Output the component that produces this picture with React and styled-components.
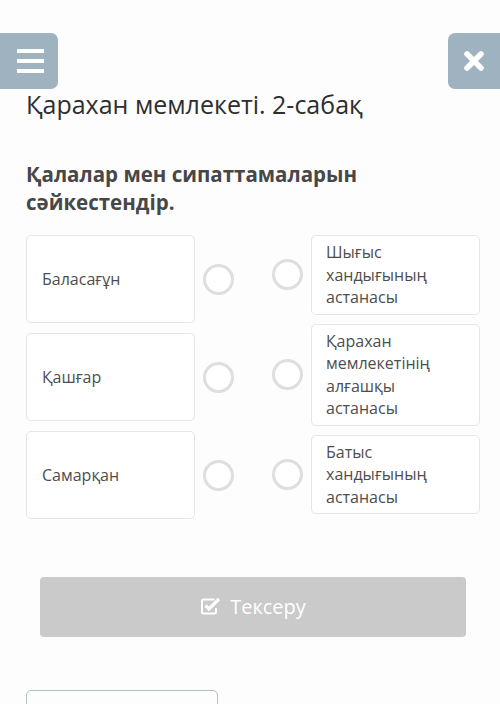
import React from 'react';
import styled, { createGlobalStyle } from 'styled-components';

const GlobalStyle = createGlobalStyle`
    html, body {
        margin: 0;
        padding: 0;
        background: #fdfdfd;
        font-family: "Open Sans", "Noto Sans", sans-serif;
    }
`;

const Page = styled.div`
    width: 500px;
    height: 704px;
    overflow: hidden;
`;

const TopBar = styled.div`
    display: flex;
    justify-content: space-between;
    padding-top: 33px;
`;

const IconButton = styled.button`
    width: ${({w}) => w}px;
    height: 56px;
    border: 0;
    padding: 0;
    background: #9fb2bf;
    border-radius: ${({side}) => side === 'left' ? '0 7px 7px 0' : '7px 0 0 7px'};
    display: flex;
    align-items: center;
    justify-content: center;
`;

const Burger = styled.div`
    display: flex;
    flex-direction: column;
    gap: 6px;
    margin-left: 2px;
    span {
        display: block;
        width: 27px;
        height: 4px;
        background: #fff;
    }
`;

const Title = styled.h1`
    margin: 0;
    padding: 0 26px;
    font-size: 25px;
    font-weight: 400;
    line-height: 30px;
    color: #2e2e2e;
`;

const Task = styled.h2`
    margin: 0;
    padding: 41px 26px 0;
    font-size: 20.5px;
    font-weight: 700;
    line-height: 28px;
    color: #474747;
`;

const Board = styled.div`
    display: flex;
    justify-content: space-between;
    padding: 19px 20px 0 26px;
`;

const Column = styled.div`
    display: flex;
    flex-direction: column;
    gap: ${({gap}) => gap}px;
`;

const Pair = styled.div`
    display: flex;
    align-items: center;
    gap: ${({gap}) => gap}px;
`;

const Card = styled.div`
    box-sizing: border-box;
    width: 169px;
    min-height: ${({minH}) => minH || 0}px;
    padding: ${({pad}) => pad};
    border: 1.5px solid #e6e6e6;
    border-radius: 5px;
    background: #fff;
    display: flex;
    align-items: center;
    font-size: 16px;
    line-height: 22.5px;
    color: #4e4e4e;
`;

const Lines = styled.div`
    display: flex;
    flex-direction: column;
`;

const Dot = styled.div`
    box-sizing: border-box;
    width: 31px;
    height: 31px;
    border-radius: 50%;
    border: 3px solid #dedede;
    background: #fff;
`;

const CheckButton = styled.button`
    display: flex;
    align-items: center;
    justify-content: center;
    gap: 9px;
    width: 426px;
    height: 60px;
    margin: 58px 0 0 40px;
    border: 0;
    border-radius: 4px;
    background: #cacaca;
    color: #fff;
    font-family: inherit;
    font-size: 20px;
    padding: 0 0 2px;
`;

const NextBox = styled.div`
    width: 190px;
    height: 40px;
    margin: 53px 0 0 26px;
    border: 1.5px solid #b5c1c1;
    border-radius: 5px;
`;

const leftItems = ['Баласағұн', 'Қашғар', 'Самарқан'];
const rightItems = [
    ['Шығыс', 'хандығының', 'астанасы'],
    ['Қарахан', 'мемлекетінің', 'алғашқы', 'астанасы'],
    ['Батыс', 'хандығының', 'астанасы'],
];

const CloseIcon = () => (
    <svg width="22" height="22" viewBox="0 0 22 22">
        <path d="M4 4 L18 18 M18 4 L4 18" stroke="#fff" strokeWidth="5.5" strokeLinecap="round" />
    </svg>
);

const CheckIcon = () => (
    <svg width="21" height="20" viewBox="0 0 21 20">
        <path d="M14.5 3.5 H3.5 A1.5 1.5 0 0 0 2 5 V16 A1.5 1.5 0 0 0 3.5 17.5 H14.5 A1.5 1.5 0 0 0 16 16 V12"
            fill="none" stroke="#fff" strokeWidth="2" />
        <path d="M5.5 9.5 L9 13 L19 3" fill="none" stroke="#fff" strokeWidth="3.2" strokeLinejoin="miter" />
    </svg>
);

export default function App() {
    return (
        <Page>
            <GlobalStyle />
            <TopBar>
                <IconButton side="left" w={58}>
                    <Burger><span /><span /><span /></Burger>
                </IconButton>
                <IconButton side="right" w={52}>
                    <CloseIcon />
                </IconButton>
            </TopBar>
            <Title>Қарахан мемлекеті. 2-сабақ</Title>
            <Task>Қалалар мен сипаттамаларын сәйкестендір.</Task>
            <Board>
                <Column gap={10}>
                    {leftItems.map((t) => (
                        <Pair key={t} gap={8}>
                            <Card minH={88} pad="0 15px">{t}</Card>
                            <Dot />
                        </Pair>
                    ))}
                </Column>
                <Column gap={9}>
                    {rightItems.map((lines, i) => (
                        <Pair key={i} gap={8}>
                            <Dot />
                            <Card pad="5px 14px">
                                <Lines>
                                    {lines.map((l) => <span key={l}>{l}</span>)}
                                </Lines>
                            </Card>
                        </Pair>
                    ))}
                </Column>
            </Board>
            <CheckButton>
                <CheckIcon />
                Тексеру
            </CheckButton>
            <NextBox />
        </Page>
    );
}
